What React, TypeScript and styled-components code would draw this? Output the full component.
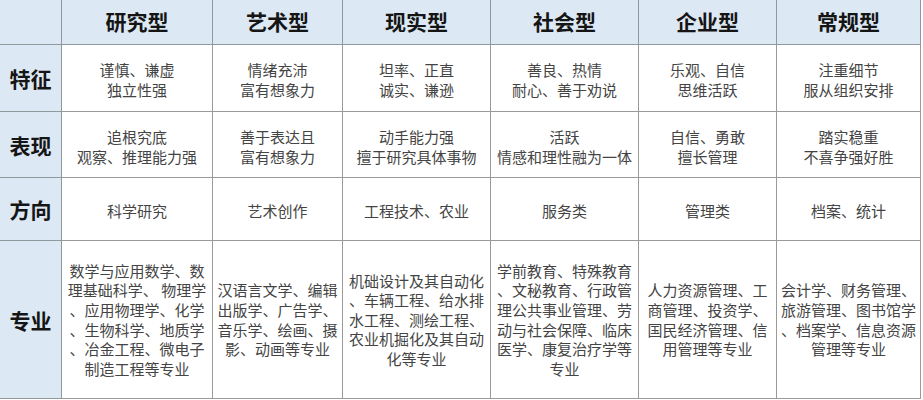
import { Fragment } from 'react'
import { createGlobalStyle, styled } from 'styled-components'

const GlobalStyle = createGlobalStyle`
  html, body {
    margin: 0;
    padding: 0;
    background: #ffffff;
  }
  body {
    font-family: "Noto Sans CJK SC", "Noto Sans", sans-serif;
  }
  * {
    box-sizing: border-box;
  }
`

const types = ['研究型', '艺术型', '现实型', '社会型', '企业型', '常规型']

interface Row {
  label: string
  spec?: boolean
  cells: string[][]
}

const rows: Row[] = [
  {
    label: '特征',
    cells: [
      ['谨慎、谦虚', '独立性强'],
      ['情绪充沛', '富有想象力'],
      ['坦率、正直', '诚实、谦逊'],
      ['善良、热情', '耐心、善于劝说'],
      ['乐观、自信', '思维活跃'],
      ['注重细节', '服从组织安排']
    ]
  },
  {
    label: '表现',
    cells: [
      ['追根究底', '观察、推理能力强'],
      ['善于表达且', '富有想象力'],
      ['动手能力强', '擅于研究具体事物'],
      ['活跃', '情感和理性融为一体'],
      ['自信、勇敢', '擅长管理'],
      ['踏实稳重', '不喜争强好胜']
    ]
  },
  {
    label: '方向',
    cells: [
      ['科学研究'],
      ['艺术创作'],
      ['工程技术、农业'],
      ['服务类'],
      ['管理类'],
      ['档案、统计']
    ]
  },
  {
    label: '专业',
    spec: true,
    cells: [
      ['数学与应用数学、数', '理基础科学、 物理学', '、应用物理学、化学', '、生物科学、地质学', '、冶金工程、微电子', '制造工程等专业'],
      ['汉语言文学、编辑', '出版学、广告学、', '音乐学、绘画、摄', '影、动画等专业'],
      ['机础设计及其自动化', '、车辆工程、给水排', '水工程、测绘工程、', '农业机掘化及其自动', '化等专业'],
      ['学前教育、特殊教育', '、文秘教育、行政管', '理公共事业管理、劳', '动与社会保障、临床', '医学、康复治疗学等', '专业'],
      ['人力资源管理、工', '商管理、投资学、', '国民经济管理、信', '用管理等专业'],
      ['会计学、财务管理、', '旅游管理、图书馆学', '、档案学、信息资源', '管理等专业']
    ]
  }
]

const App = () => {
  return (
    <>
      <GlobalStyle />
      <Table>
        <HeadCell />
        {types.map((t) => (
          <HeadCell key={t}>{t}</HeadCell>
        ))}
        {rows.map((row) => (
          <Fragment key={row.label}>
            <RowLabel>{row.label}</RowLabel>
            {row.cells.map((lines, i) => (
              <Cell key={i} $spec={row.spec}>
                {lines.map((l, j) => (
                  <Line key={j}>{l}</Line>
                ))}
              </Cell>
            ))}
          </Fragment>
        ))}
      </Table>
    </>
  )
}
export default App

const Table = styled.div`
  display: grid;
  grid-template-columns: 62px 151px 130px 148px 148px 138px 144px;
  grid-template-rows: 45px 67px 66px 63px 158px;
  width: 923px;
  height: 400px;
  background: #ffffff;
`

const HeadCell = styled.div`
  display: flex;
  align-items: center;
  justify-content: center;
  background: #dce8f4;
  border-right: 1px solid #8f989d;
  border-bottom: 1px solid #8f989d;
  font-size: 21px;
  font-weight: 700;
  color: #151515;
  padding-bottom: 2px;
`

const RowLabel = styled.div`
  display: flex;
  align-items: center;
  justify-content: center;
  background: #dce8f4;
  border-right: 1px solid #8f989d;
  border-bottom: 1px solid #8f989d;
  font-size: 21px;
  font-weight: 700;
  color: #151515;
`

const Cell = styled.div<{ $spec?: boolean }>`
  display: flex;
  flex-direction: column;
  align-items: center;
  justify-content: center;
  border-right: 1px solid #9a9a9a;
  border-bottom: 1px solid #9a9a9a;
  font-size: 15px;
  line-height: 19.6px;
  color: #444444;
  text-align: center;
  white-space: nowrap;
  padding-top: ${(p) => (p.$spec ? '0' : '4px')};
`

const Line = styled.div`
  text-align: center;
`
